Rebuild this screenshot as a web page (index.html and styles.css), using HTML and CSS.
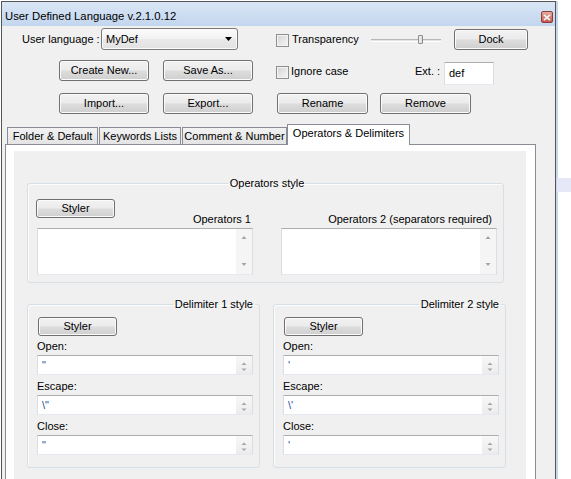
FILE: index.html
```html
<!DOCTYPE html>
<html>
<head>
<meta charset="utf-8">
<title>User Defined Language</title>
<link rel="stylesheet" href="styles.css">
</head>
<body>
<div class="desk-mark"></div>
<div class="window">
  <div class="titlebar">
    <span class="title">User Defined Language v.2.1.0.12</span>
    <span class="close"><svg width="8" height="7" viewBox="0 0 8 7"><path d="M1 0.8 L7 6.2 M7 0.8 L1 6.2" stroke="#f4f4f4" stroke-width="1.7"/></svg></span>
  </div>
  <div class="client">
    <div class="row row1">
      <span class="lang-lbl">User language :</span>
      <div class="combo"><span class="combo-val">MyDef</span><svg class="caret" width="7" height="4" viewBox="0 0 7 4"><polygon points="0,0 7,0 3.5,4" fill="#000"/></svg></div>
      <span class="check chk-a"></span><span class="chk-lbl trans-lbl">Transparency</span>
      <div class="slider"><span class="thumb"></span></div>
      <button class="btn dock">Dock</button>
    </div>
    <div class="row row2">
      <button class="btn w90">Create New...</button>
      <button class="btn w90 ml14">Save As...</button>
      <span class="check chk-b"></span><span class="chk-lbl ign-lbl">Ignore case</span>
      <span class="ext-lbl">Ext. :</span>
      <div class="edit ext-edit">def</div>
    </div>
    <div class="row row3">
      <button class="btn w90">Import...</button>
      <button class="btn w90 ml14">Export...</button>
      <button class="btn w91 ml24">Rename</button>
      <button class="btn w91 ml12">Remove</button>
    </div>
    <div class="tabs">
      <span class="tab t1">Folder &amp; Default</span>
      <span class="tab t2">Keywords Lists</span>
      <span class="tab t3">Comment &amp; Number</span>
      <span class="tab active t4">Operators &amp; Delimiters</span>
    </div>
    <div class="panel">
      <div class="inner">
        <fieldset class="group ops">
          <legend class="center">Operators style</legend>
          <div class="ops-grid">
            <div class="ops-head">
              <button class="btn styler styler-ops">Styler</button>
              <span class="ops-lbl">Operators 1</span>
            </div>
            <div class="ops-head end">
              <span class="ops-lbl lbl2">Operators 2 (separators required)</span>
            </div>
            <div class="textarea">
              <div class="ta-val"></div>
              <div class="vscroll"><svg width="16" height="45" viewBox="0 0 16 45"><polygon points="5.5,10 8,7 10.5,10" fill="#a4a4a4"/><polygon points="5.5,34 10.5,34 8,37" fill="#a4a4a4"/></svg></div>
            </div>
            <div class="textarea">
              <div class="ta-val"></div>
              <div class="vscroll"><svg width="16" height="45" viewBox="0 0 16 45"><polygon points="5.5,10 8,7 10.5,10" fill="#a4a4a4"/><polygon points="5.5,34 10.5,34 8,37" fill="#a4a4a4"/></svg></div>
            </div>
          </div>
        </fieldset>
        <div class="delims">
          <fieldset class="group delim">
            <legend class="right">Delimiter 1 style</legend>
            <button class="btn styler styler-d">Styler</button>
            <div class="dlbl first">Open:</div>
            <div class="edit spin-edit"><span class="val">"</span><span class="spin"><svg width="16" height="18" viewBox="0 0 16 18"><polygon points="5.5,9 8,6.5 10.5,9" fill="#a6a6a6"/><polygon points="5.5,12.5 10.5,12.5 8,15" fill="#a6a6a6"/></svg></span></div>
            <div class="dlbl">Escape:</div>
            <div class="edit spin-edit"><span class="val">\"</span><span class="spin"><svg width="16" height="18" viewBox="0 0 16 18"><polygon points="5.5,9 8,6.5 10.5,9" fill="#a6a6a6"/><polygon points="5.5,12.5 10.5,12.5 8,15" fill="#a6a6a6"/></svg></span></div>
            <div class="dlbl">Close:</div>
            <div class="edit spin-edit"><span class="val">"</span><span class="spin"><svg width="16" height="18" viewBox="0 0 16 18"><polygon points="5.5,9 8,6.5 10.5,9" fill="#a6a6a6"/><polygon points="5.5,12.5 10.5,12.5 8,15" fill="#a6a6a6"/></svg></span></div>
          </fieldset>
          <fieldset class="group delim">
            <legend class="right">Delimiter 2 style</legend>
            <button class="btn styler styler-d">Styler</button>
            <div class="dlbl first">Open:</div>
            <div class="edit spin-edit"><span class="val">'</span><span class="spin"><svg width="16" height="18" viewBox="0 0 16 18"><polygon points="5.5,9 8,6.5 10.5,9" fill="#a6a6a6"/><polygon points="5.5,12.5 10.5,12.5 8,15" fill="#a6a6a6"/></svg></span></div>
            <div class="dlbl">Escape:</div>
            <div class="edit spin-edit"><span class="val">\'</span><span class="spin"><svg width="16" height="18" viewBox="0 0 16 18"><polygon points="5.5,9 8,6.5 10.5,9" fill="#a6a6a6"/><polygon points="5.5,12.5 10.5,12.5 8,15" fill="#a6a6a6"/></svg></span></div>
            <div class="dlbl">Close:</div>
            <div class="edit spin-edit"><span class="val">'</span><span class="spin"><svg width="16" height="18" viewBox="0 0 16 18"><polygon points="5.5,9 8,6.5 10.5,9" fill="#a6a6a6"/><polygon points="5.5,12.5 10.5,12.5 8,15" fill="#a6a6a6"/></svg></span></div>
          </fieldset>
        </div>
      </div>
    </div>
  </div>
</div>
</body>
</html>
```

FILE: styles.css
```css
html, body {
  margin: 0;
  padding: 0;
}
body {
  position: relative;
  width: 571px;
  height: 479px;
  overflow: hidden;
  background: #fff;
  font: 11px/13px "Liberation Sans", Arial, sans-serif;
  color: #000;
}
.desk-mark {
  position: absolute;
  left: 557px;
  top: 178px;
  width: 14px;
  height: 14px;
  background: #e6e8f8;
}
.window {
  margin: 1px 0 0 1px;
  width: 555px;
  height: 478px;
  overflow: hidden;
  box-sizing: border-box;
  border: 1px solid #555;
  border-bottom: none;
  background: #f0f0f0;
  box-shadow: 2px 0 0 #c6d8ee;
}
.titlebar {
  display: flex;
  justify-content: space-between;
  align-items: flex-start;
  height: 24px;
  box-sizing: border-box;
  padding: 7px 2px 0 3px;
  background: linear-gradient(#d9e6f5, #c3d6ee);
}
.title {
  font-size: 11.3px;
  line-height: 14px;
}
.close {
  display: flex;
  align-items: center;
  justify-content: center;
  width: 12px;
  height: 12px;
  box-sizing: border-box;
  margin-top: 2px;
  border: 1px solid #8a3f3a;
  border-radius: 2px;
  background: linear-gradient(#e7aaa2, #c7574d);
}
.client {
  padding-top: 2px;
}
.row {
  display: flex;
  align-items: center;
}
.row1 {
  height: 22px;
  padding-left: 20px;
}
.row2 {
  height: 21px;
  margin-top: 10px;
  padding-left: 57px;
}
.row3 {
  height: 21px;
  margin-top: 12px;
  padding-left: 57px;
}
.lang-lbl {
  width: 79px;
  flex: none;
}
.combo {
  display: flex;
  align-items: center;
  justify-content: space-between;
  width: 137px;
  height: 22px;
  box-sizing: border-box;
  padding: 0 5px 0 4px;
  border: 1px solid #7a7a7a;
  border-radius: 3px;
  background: linear-gradient(#fcfcfc, #f1f1f1 50%, #e9e9e9 50%, #e2e2e2);
  box-shadow: inset 0 0 0 1px #fafafa;
}
.caret {
  display: block;
}
.check {
  flex: none;
  width: 13px;
  height: 13px;
  box-sizing: border-box;
  border: 1px solid #8e8f8f;
  background: linear-gradient(135deg, #d4d4d4, #f6f6f6);
  box-shadow: inset 0 0 0 1px #f3f3f3;
}
.chk-a {
  margin-left: 38px;
  margin-top: 2px;
}
.chk-b {
  margin-left: 23px;
  margin-top: 4px;
}
.trans-lbl {
  width: 79px;
  padding-left: 3px;
}
.ign-lbl {
  width: 124px;
  padding-left: 2px;
  margin-top: 2px;
}
.chk-lbl {
  flex: none;
}
.slider {
  flex: none;
  display: flex;
  align-items: center;
  width: 70px;
  height: 10px;
  margin-top: 1px;
  background: linear-gradient(transparent 4px, #b7b7b7 4px, #b7b7b7 5px, #e2e2e2 5px, #e2e2e2 6px, #fff 6px, #fff 7px, transparent 7px);
}
.thumb {
  width: 5px;
  height: 9px;
  box-sizing: border-box;
  margin-left: 47px;
  border: 1px solid #8c8c8c;
  border-radius: 1px;
  background: linear-gradient(90deg, #f4f4f4, #dadada);
}
.btn {
  flex: none;
  box-sizing: border-box;
  height: 21px;
  padding: 0;
  border: 1px solid #707070;
  border-radius: 3px;
  background: linear-gradient(#f2f2f2 0%, #ebebeb 48%, #dddddd 52%, #cfcfcf 100%);
  box-shadow: inset 0 0 0 1px #fbfbfb;
  font: inherit;
  color: #000;
  text-align: center;
}
.dock {
  width: 74px;
  margin-left: 13px;
  margin-top: 1px;
}
.w90 { width: 90px; }
.w91 { width: 91px; }
.ml14 { margin-left: 14px; }
.ml24 { margin-left: 24px; }
.ml12 { margin-left: 12px; }
.ext-lbl {
  width: 29px;
  flex: none;
  margin-top: 2px;
}
.edit {
  box-sizing: border-box;
  background: #fff;
  border: 1px solid #dcdde4;
  border-top-color: #abadb3;
  border-bottom-color: #e3e9ef;
}
.ext-edit {
  align-self: flex-start;
  width: 50px;
  height: 23px;
  margin-top: 2px;
  padding: 4px 0 0 4px;
}
.tabs {
  display: flex;
  align-items: flex-end;
  height: 20px;
  margin-top: 10px;
  padding-left: 5px;
}
.tab {
  box-sizing: border-box;
  height: 17px;
  padding-top: 2px;
  border: 1px solid #898c95;
  border-bottom: none;
  background: linear-gradient(#f2f2f2, #e4e4e4);
  text-align: center;
  white-space: nowrap;
}
.t1 { width: 91px; margin-right: 1px; }
.t2 { width: 82px; margin-right: 1px; }
.t3 { width: 105px; }
.t4 { width: 123px; }
.tab.active {
  position: relative;
  z-index: 1;
  height: 21px;
  margin-bottom: -1px;
  padding-top: 2px;
  background: #fff;
}
.panel {
  width: 531px;
  margin-left: 3px;
  height: 335px;
  box-sizing: border-box;
  border: 1px solid #898c95;
  border-bottom: none;
  padding: 6px 9px 0 8px;
  background: #fff;
}
.inner {
  height: 328px;
  box-sizing: border-box;
  padding: 26px 0 0 13px;
  background: #f0f0f0;
}
.group {
  margin: 0;
  min-inline-size: 0;
  box-sizing: border-box;
  border: 1px solid #d5dfe5;
  border-radius: 3px;
  box-shadow: inset 1px 1px 0 #fcfcfc;
}
.group legend {
  padding: 0 2px;
  line-height: 13px;
}
.group legend.center {
  margin: 0 auto;
}
.group legend.right {
  margin-left: auto;
  margin-right: -2px;
}
.ops {
  width: 477px;
  padding: 9px 6px 7px 9px;
}
.ops-grid {
  display: grid;
  grid-template-columns: 216px 216px;
  column-gap: 28px;
}
.ops-head {
  display: flex;
  justify-content: space-between;
  align-items: flex-start;
  height: 27px;
}
.ops-head.end {
  justify-content: flex-end;
}
.ops-lbl {
  align-self: flex-end;
  padding-right: 2px;
}
.ops-lbl.lbl2 {
  padding-right: 5px;
}
.styler {
  width: 79px;
  height: 19px;
}
.styler-ops {
  margin-left: -1px;
}
.styler-d {
  display: block;
  margin-left: 1px;
}
.textarea {
  display: flex;
  height: 47px;
  margin-top: 2px;
  box-sizing: border-box;
  background: #fff;
  border: 1px solid #dcdde4;
  border-top-color: #abadb3;
  border-bottom-color: #e3e9ef;
}
.ta-val {
  flex: 1;
}
.vscroll {
  width: 16px;
  background: #f5f5f5;
}
.vscroll svg, .spin svg {
  display: block;
}
.delims {
  display: flex;
  gap: 13px;
  margin-top: 15px;
}
.delim {
  width: 233px;
  padding: 6px 6px 12px 9px;
}
.dlbl {
  margin-top: 5px;
}
.dlbl.first {
  margin-top: 4px;
}
.spin-edit {
  display: flex;
  height: 20px;
  margin-top: 2px;
}
.val {
  flex: 1;
  padding: 3px 0 0 4px;
  color: #1f4fa8;
}
.spin {
  width: 16px;
  background: linear-gradient(#f7f7f7, #ececec);
}
```
